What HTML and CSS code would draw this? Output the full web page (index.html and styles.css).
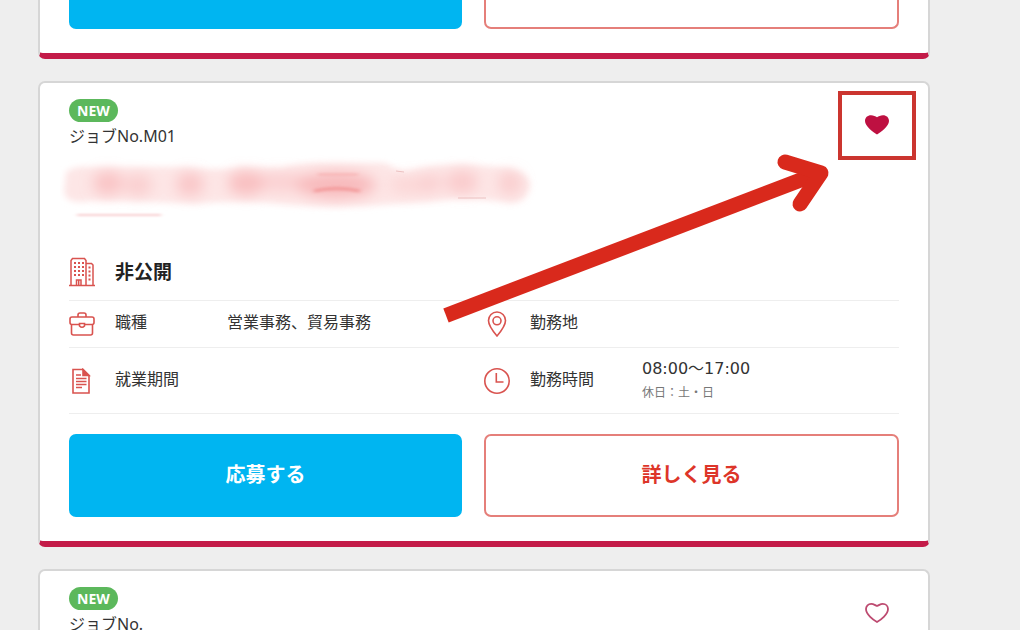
FILE: index.html
```html
<!DOCTYPE html>
<html lang="ja">
<head>
<meta charset="utf-8">
<meta name="viewport" content="width=device-width, initial-scale=1">
<title>お仕事一覧</title>
<link rel="stylesheet" href="styles.css">
</head>
<body>
<main class="jobs">
  <article class="card card-cut">
    <div class="actions actions-cut">
      <button class="btn btn-apply" type="button" aria-label="応募"></button>
      <button class="btn btn-detail" type="button" aria-label="詳細"></button>
    </div>
  </article>

  <article class="card">
    <header class="card-head">
      <span class="badge">NEW</span>
      <p class="job-no">ジョブNo.M01</p>
    </header>
    <button class="favorite favorite-marked" type="button" aria-label="お気に入り解除">
      <svg class="heart" viewBox="0 0 26 22"><path d="M13 20.500C9.500 18.200 1 12.500 1 7C1 3.500 3.500 1.200 7 1.200C9.500 1.200 11.500 2.200 13 3.200C14.500 2.200 16.500 1.200 19 1.200C22.500 1.200 25 3.500 25 7C25 12.500 16.500 18.200 13 20.500Z" fill="#be1041"/></svg>
    </button>

    <svg class="masked-title" width="480" height="72" viewBox="60 154 480 72" aria-hidden="true">
      <defs>
        <filter id="soft" x="-20%" y="-50%" width="140%" height="200%"><feGaussianBlur stdDeviation="3"/></filter>
        <filter id="wide" x="-50%" y="-50%" width="200%" height="200%"><feGaussianBlur stdDeviation="7"/></filter>
        <filter id="thin" x="-20%" y="-300%" width="140%" height="700%"><feGaussianBlur stdDeviation="2 1"/></filter>
      </defs>
      <path filter="url(#soft)" fill="#fde6e6" d="M66 172Q74 166 90 167H185Q220 171 240 167L282 168Q300 162 330 163H385Q395 169 405 171Q430 164 465 164L510 168Q530 173 530 186Q527 203 510 203Q485 199 455 199Q430 203 395 204Q340 209 290 205Q240 199 195 204Q150 201 90 201Q66 205 64 192Z"/>
      <g filter="url(#wide)" fill="#f7b2b4">
        <ellipse cx="108" cy="183" rx="15" ry="12" opacity=".65"/>
        <ellipse cx="138" cy="185" rx="14" ry="11" opacity=".45"/>
        <ellipse cx="190" cy="184" rx="14" ry="12" opacity=".6"/>
        <ellipse cx="246" cy="183" rx="18" ry="12" opacity=".75"/>
        <ellipse cx="282" cy="182" rx="26" ry="10" opacity=".4"/>
        <ellipse cx="336" cy="185" rx="40" ry="13" opacity=".85"/>
        <ellipse cx="410" cy="185" rx="22" ry="9" opacity=".3"/>
        <ellipse cx="432" cy="183" rx="12" ry="10" opacity=".35"/>
        <ellipse cx="462" cy="182" rx="16" ry="12" opacity=".5"/>
        <ellipse cx="510" cy="183" rx="12" ry="12" opacity=".45"/>
      </g>
      <path filter="url(#thin)" d="M314 191Q336 186 360 191" fill="none" stroke="#f08585" stroke-width="4" opacity=".5"/>
      <rect filter="url(#thin)" x="318" y="173" width="40" height="3" fill="#f5a3a3" opacity=".4"/>
      <path d="M396 171L404 172M458 198H486" stroke="#e0a5a5" opacity=".6"/>
      <rect filter="url(#thin)" x="77" y="214" width="84" height="2" fill="#f8cfd0"/>
    </svg>

    <div class="company">
      <svg class="icon" viewBox="0 0 26 30" fill="none" stroke="#d9534f" stroke-width="1.500"><path d="M0 28.500H26M2 28V3.500L3.500 1.500H15.500L17 3.500V28M17 6.500H22.500L24 8V28M7.500 28V23H12V28M9.700 23V28"/><path d="M5 6H15M5 10H15M5 14H15M5 18H15M19.500 10.500H22.500M19.500 14.500H22.500M19.500 18.500H22.500M19.500 22.500H22.500" stroke-width="2" stroke-dasharray="2 2"/></svg>
      <h2 class="company-name">非公開</h2>
    </div>

    <dl class="details">
      <div class="detail">
        <svg class="icon" viewBox="0 0 26 26" fill="none" stroke="#d9534f" stroke-width="1.600"><rect x="1" y="6" width="24" height="7.500" rx="2"/><path d="M9 6V4Q9 2 11 2H15Q17 2 17 4V6M2.500 13.500V22Q2.500 24 4.500 24H21.500Q23.500 24 23.500 22V13.500"/><path d="M10.500 12.500H15.500V15Q13 17.500 10.500 15Z" fill="#fff"/></svg>
        <dt>職種</dt>
        <dd>営業事務、貿易事務</dd>
      </div>
      <div class="detail">
        <svg class="icon" viewBox="0 0 26 26" fill="none" stroke="#d9534f" stroke-width="1.600"><path d="M13 25Q4.500 15 4.500 9.500A8.500 8.500 0 0 1 21.500 9.500Q21.500 15 13 25Z"/><circle cx="13" cy="9.800" r="4"/></svg>
        <dt>勤務地</dt>
        <dd></dd>
      </div>
      <div class="detail detail-tall">
        <svg class="icon" viewBox="0 0 26 26" fill="none" stroke="#d9534f" stroke-width="1.600"><path d="M4 1.500H14L20 7.500V25H4Z"/><path d="M14 1.500V7.500H20Z" fill="#d9534f"/><path d="M7 7H12M7 10.500H17.500M7 13.500H17.500M7 16.500H17.500M7 19.500H13"/></svg>
        <dt>就業期間</dt>
        <dd></dd>
      </div>
      <div class="detail detail-tall">
        <svg class="icon" viewBox="0 0 26 26" fill="none" stroke="#d9534f" stroke-width="1.600"><circle cx="13" cy="13" r="12.200"/><path d="M12.300 5V14H19.500"/></svg>
        <dt>勤務時間</dt>
        <dd class="hours"><span class="time">08:00～17:00</span><small class="holiday">休日：土・日</small></dd>
      </div>
    </dl>

    <div class="actions">
      <button class="btn btn-apply" type="button">応募する</button>
      <button class="btn btn-detail" type="button">詳しく見る</button>
    </div>

    <svg class="arrow" width="392" height="180" viewBox="440 150 392 180" fill="none" stroke="#d9291c" stroke-width="15" aria-hidden="true"><path d="M446 315.500L819 173"/><path d="M785 162L821 173L800 204" stroke-linecap="round" stroke-linejoin="round"/></svg>
  </article>

  <article class="card">
    <header class="card-head">
      <span class="badge">NEW</span>
      <p class="job-no">ジョブNo.</p>
    </header>
    <button class="favorite" type="button" aria-label="お気に入り追加">
      <svg class="heart" viewBox="0 0 26 22"><path d="M13 20C9.500 18 2 12.500 2 7C2 4 4.200 1.800 7.200 1.800C9.500 1.800 11 3.200 13 4C15 3.200 16.500 1.800 18.800 1.800C21.800 1.800 24 4 24 7C24 12.500 16.500 18 13 20Z" fill="none" stroke="#bd4a70" stroke-width="1.800"/></svg>
    </button>
  </article>
</main>
</body>
</html>
```
FILE: styles.css
```css
* {
  box-sizing: border-box;
}

body {
  margin: 0;
  background: #eeeeee;
  color: #333333;
  font: 16px/24px "Noto Sans", "Noto Sans CJK JP", sans-serif;
}

.jobs {
  display: flex;
  flex-direction: column;
  gap: 22px;
  height: 100vh;
  overflow: hidden;
  padding: 0 90px 0 38px;
}

.card {
  position: relative;
  flex: none;
  padding: 16px 29px 24px;
  background: #ffffff;
  border: 2px solid #d6d6d6;
  border-bottom: 6px solid #c31b48;
  border-radius: 7px;
}

.card-cut {
  padding-top: 0;
  border-top: 0;
  border-top-left-radius: 0;
  border-top-right-radius: 0;
}

.card-head {
  display: flex;
  flex-direction: column;
  align-items: flex-start;
}

.badge {
  padding: 0 8px;
  border-radius: 12px;
  background: #5cb85c;
  color: #ffffff;
  font-size: 14px;
  font-weight: 700;
  line-height: 23px;
}

.job-no {
  margin: 2px 0 0;
}

.favorite {
  position: absolute;
  top: 8px;
  right: 12px;
  display: grid;
  place-items: center;
  width: 78px;
  height: 69px;
  padding: 0 0 2px;
  border: 4px solid transparent;
  background: none;
}

.favorite-marked {
  border-color: #cb352f;
}

.heart {
  width: 26px;
  height: 22px;
}

.masked-title {
  display: block;
  margin: 6px 0 0 -9px;
}

.company {
  display: flex;
  align-items: center;
  gap: 20px;
  margin-top: 18px;
  height: 56px;
}

.company-name {
  margin: 0;
  color: #222222;
  font-size: 19px;
}

.icon {
  flex: none;
  width: 26px;
}

.details {
  display: grid;
  grid-template-columns: 1fr 1fr;
  margin: 0;
}

.detail {
  display: grid;
  grid-template-columns: 26px 92px 1fr;
  column-gap: 20px;
  align-items: center;
  min-height: 47px;
  border-top: 1px solid #eeeeee;
}

.detail-tall {
  min-height: 67px;
  border-bottom: 1px solid #eeeeee;
}

.detail dt,
.detail dd {
  margin: 0;
  padding-bottom: 4px;
}

.detail .hours {
  padding-bottom: 0;
}

.time,
.holiday {
  display: block;
}

.time {
  font-family: "DejaVu Sans", "Noto Sans CJK JP", sans-serif;
}

.holiday {
  color: #777777;
  font-size: 12px;
}

.actions {
  display: grid;
  grid-template-columns: 1fr 1fr;
  margin-top: 20px;
}

.btn {
  height: 83px;
  padding: 0 0 4px;
  border: 2px solid #e57f7a;
  border-radius: 7px;
  background: #ffffff;
  color: #dd3529;
  font: 700 20px/24px "Noto Sans CJK JP", sans-serif;
}

.btn-apply {
  margin-right: 22px;
  border-color: #00b5f1;
  background: #00b5f1;
  color: #ffffff;
}

.actions-cut {
  margin-top: 0;
}

.actions-cut .btn {
  height: 29px;
  border-top: 0;
  border-top-left-radius: 0;
  border-top-right-radius: 0;
}

.arrow {
  position: absolute;
  top: 67px;
  right: 96px;
}
```
